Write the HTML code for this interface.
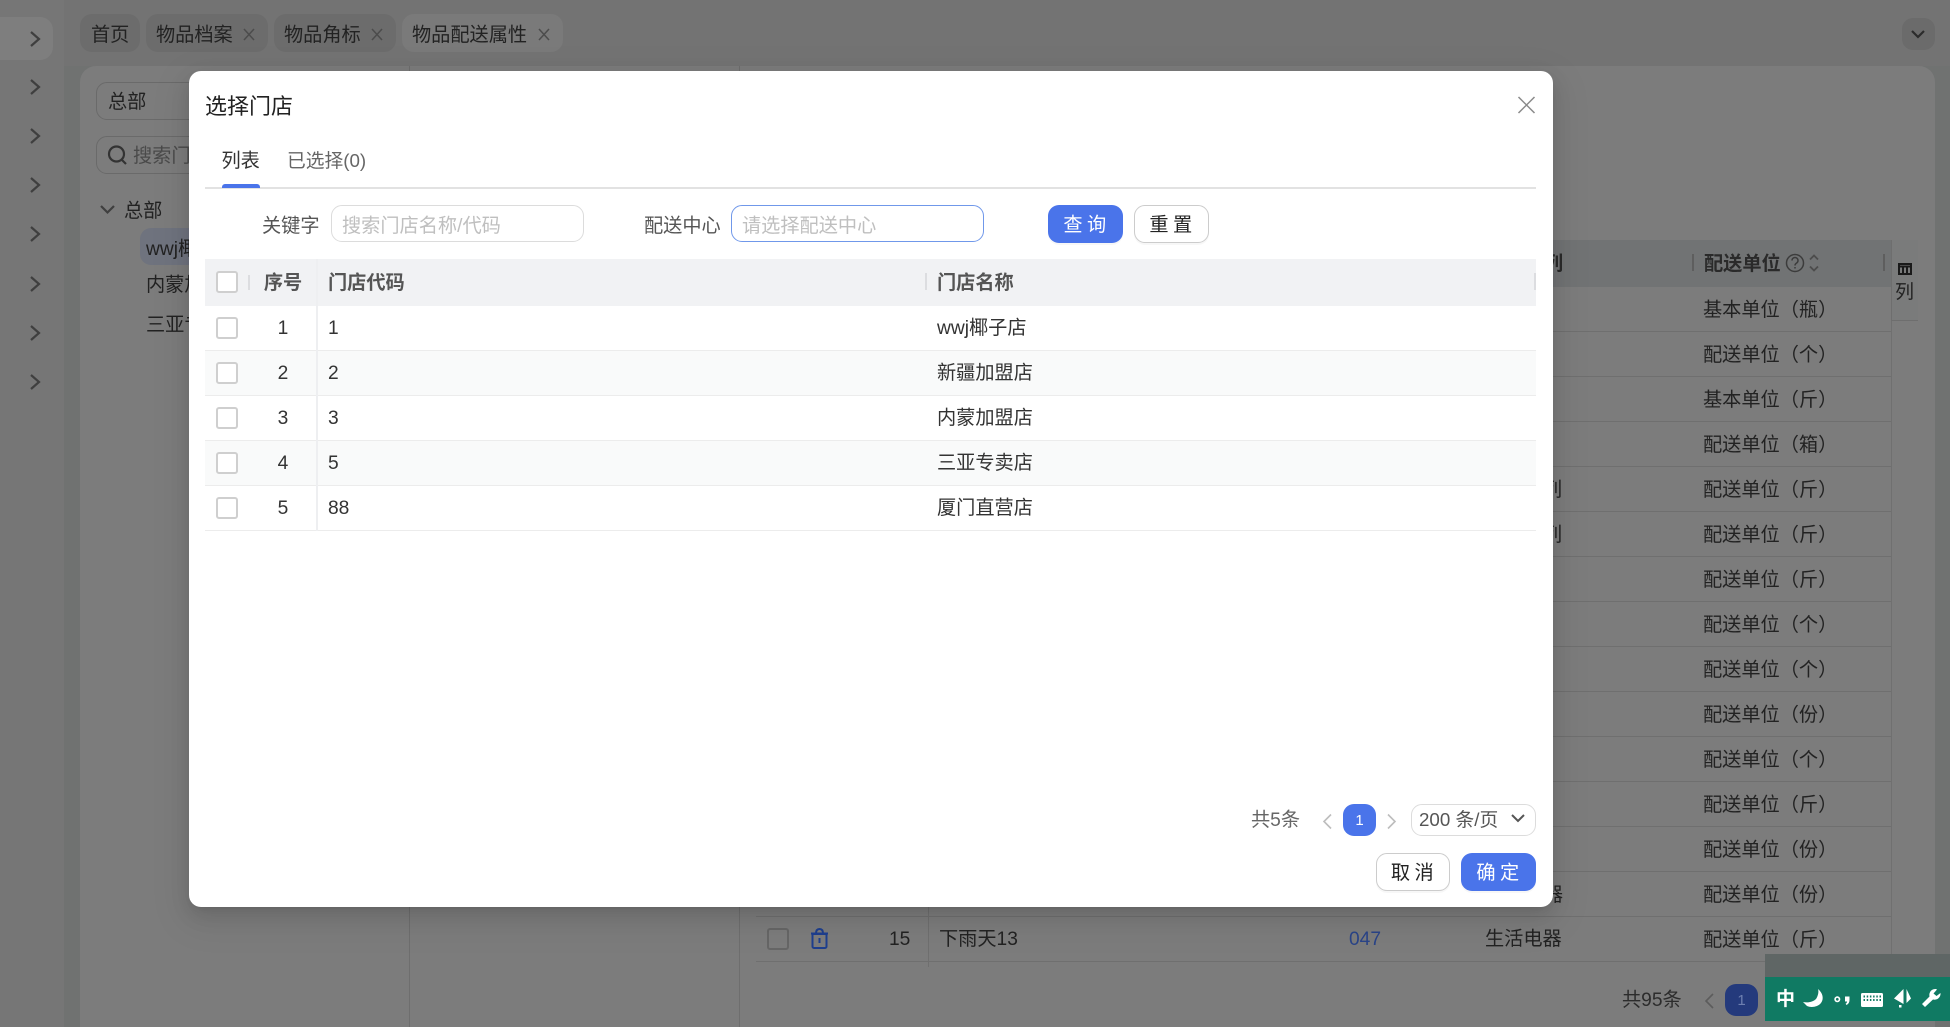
<!DOCTYPE html>
<html lang="zh-CN"><head><meta charset="utf-8"><title>选择门店</title>
<style>
*{box-sizing:border-box;margin:0;padding:0}
html,body{width:1950px;height:1027px;overflow:hidden;background:#737373}
body{position:relative;font-family:"Liberation Sans","Noto Sans CJK SC",sans-serif;font-size:19.2px;color:#222}
.a{position:absolute}
.t{position:absolute;white-space:nowrap;line-height:26px;height:26px;margin-top:1px}
.c{transform:translateX(-50%)}
.cb{position:absolute;width:22px;height:22px;border:2.5px solid #cfcfcf;border-radius:3px;background:#fff}
.bg .t{color:#222}
.hl{position:absolute;height:1px;background:#6f6f6f}
.row{position:absolute;left:205px;width:1331px;height:45px;border-bottom:1.5px solid #ececec}
.btn{position:absolute;height:38px;border-radius:11px;text-align:center;line-height:41px;letter-spacing:4.5px;padding-left:3px;box-shadow:0 2px 0 rgba(0,0,0,.03)}
.pri{background:#4a74ea;color:#fff}
.def{background:#fff;border:1.5px solid #ccc;color:#222;line-height:39px}
.inp{position:absolute;top:205px;height:37px;width:253px;border:1.5px solid #dcdcdc;border-radius:11px;background:#fff}
.ph{color:#bfbfbf}
.sep{position:absolute;width:2px;background:#dcdde0}
svg{position:absolute;overflow:visible}
</style></head><body>

<!-- dimmed background -->
<div class="bg">
<div class="a" style="left:0;top:0;width:64px;height:1027px;background:#767676"></div>
<div class="a" style="left:0;top:17px;width:53px;height:43px;background:#7e7e7e;border-radius:0 13px 13px 0"></div>
<div class="a" style="left:64px;top:66px;width:1886px;height:961px;background:#707271"></div>
<div class="a" style="left:80px;top:66px;width:1855px;height:961px;background:#7c7c7c;border-radius:16px 16px 0 0"></div>
<div class="a" style="left:409px;top:66px;width:1px;height:961px;background:#6e6e6e"></div>
<div class="a" style="left:739px;top:66px;width:1px;height:961px;background:#6e6e6e"></div>

<svg style="left:0;top:0" width="60" height="400" fill="none" stroke="#3f3f3f" stroke-width="2.2">
<path d="M31 32l8 7-8 7M31 80l8 7-8 7M31 129l8 7-8 7M31 178l8 7-8 7M31 227l8 7-8 7M31 277l8 7-8 7M31 326l8 7-8 7M31 375l8 7-8 7"/></svg>

<div class="a" style="left:80px;top:14px;width:60px;height:38px;background:#6c6c6c;border-radius:12px"></div>
<div class="a" style="left:146px;top:14px;width:122px;height:38px;background:#6c6c6c;border-radius:12px"></div>
<div class="a" style="left:274px;top:14px;width:122px;height:38px;background:#6c6c6c;border-radius:12px"></div>
<div class="a" style="left:402px;top:14px;width:161px;height:38px;background:#7a7a7a;border-radius:12px"></div>
<div class="t" style="left:91px;top:22px">首页</div>
<div class="t" style="left:156px;top:22px">物品档案</div>
<div class="t" style="left:284px;top:22px">物品角标</div>
<div class="t" style="left:412px;top:22px">物品配送属性</div>
<svg style="left:0;top:0" width="600" height="60" fill="none" stroke="#4c4c4c" stroke-width="1.5">
<path d="M244 29l10 11M254 29l-10 11M372 29l10 11M382 29l-10 11M539 29l10 11M549 29l-10 11"/></svg>

<div class="a" style="left:1902px;top:18px;width:33px;height:32px;background:#6b6b6b;border-radius:11px"></div>
<svg style="left:0;top:0" width="1950" height="60" fill="none" stroke="#2b2b2b" stroke-width="2.2"><path d="M1912 31l6 6 6-6"/></svg>

<div class="a" style="left:96px;top:82px;width:120px;height:38px;border:1.5px solid #6a6a6a;border-radius:11px"></div>
<div class="t" style="left:108px;top:89px">总部</div>
<div class="a" style="left:96px;top:136px;width:120px;height:38px;border:1.5px solid #6a6a6a;border-radius:11px"></div>
<svg style="left:0;top:0" width="200" height="240" fill="none" stroke="#333" stroke-width="2.2">
<circle cx="116.500" cy="154" r="7.500"/><path d="M122 160l4 4"/>
<path stroke="#3f3f3f" d="M101 206l6.500 6.500 6.500-6.500"/></svg>
<div class="t" style="left:133px;top:143px;color:#4a4a4a">搜索门店</div>
<div class="t" style="left:124px;top:198px">总部</div>
<div class="a" style="left:140px;top:228px;width:60px;height:37px;background:#6f737e;border-radius:11px"></div>
<div class="t" style="left:146px;top:236px">wwj椰子店</div>
<div class="t" style="left:146px;top:272px">内蒙加盟店</div>
<div class="t" style="left:146px;top:312px">三亚专卖店</div>

<!-- right table -->
<div class="a" style="left:756px;top:240px;width:1135px;height:47px;background:#717374"></div>
<div class="a" style="left:1891px;top:240px;width:27px;height:81px;background:#7a7b7b;border-left:1px solid #6e6e6e;border-bottom:1px solid #6e6e6e"></div>
<div class="a" style="left:1891px;top:321px;width:1px;height:640px;background:#707070"></div>
<div class="a" style="left:1692px;top:254px;width:2px;height:17px;background:#5e5e5e"></div>
<div class="a" style="left:1883px;top:254px;width:2px;height:17px;background:#5e5e5e"></div>
<div class="t" style="left:1704px;top:251px;font-weight:700;color:#2a2a2a">配送单位</div>
<svg style="left:0;top:0" width="1950" height="300" fill="none" stroke="#3c3c3c" stroke-width="1.5">
<circle cx="1795" cy="263" r="8.500"/><path d="M1792 260.500a3 3 0 1 1 4.500 2.600c-1 .6-1.500 1.200-1.500 2.400M1795 267v1.500"/>
<path stroke="#4c4c4c" stroke-width="1.800" d="M1810 259.500l4-4 4 4M1810 266.500l4 4 4-4"/>
<path stroke="#1a1a1a" stroke-width="2" d="M1899 264h12v10h-12zM1899 266.500h12M1903 266.500v7.500M1907 266.500v7.500"/></svg>
<div class="t" style="left:1895px;top:279px;font-size:19px">列</div>
<div class="t" style="left:1553px;top:251px;width:10px;overflow:hidden;font-weight:700;direction:rtl;color:#2a2a2a">列</div>
<div class="t" style="left:1553px;top:477px;width:9px;overflow:hidden;direction:rtl">列</div>
<div class="t" style="left:1553px;top:522px;width:9px;overflow:hidden;direction:rtl">列</div>
<div class="t" style="left:1553px;top:882px;width:10px;overflow:hidden;direction:rtl">器</div>

<div class="t" style="left:1703px;top:297px">基本单位（瓶）</div>
<div class="t" style="left:1703px;top:342px">配送单位（个）</div>
<div class="t" style="left:1703px;top:387px">基本单位（斤）</div>
<div class="t" style="left:1703px;top:432px">配送单位（箱）</div>
<div class="t" style="left:1703px;top:477px">配送单位（斤）</div>
<div class="t" style="left:1703px;top:522px">配送单位（斤）</div>
<div class="t" style="left:1703px;top:567px">配送单位（斤）</div>
<div class="t" style="left:1703px;top:612px">配送单位（个）</div>
<div class="t" style="left:1703px;top:657px">配送单位（个）</div>
<div class="t" style="left:1703px;top:702px">配送单位（份）</div>
<div class="t" style="left:1703px;top:747px">配送单位（个）</div>
<div class="t" style="left:1703px;top:792px">配送单位（斤）</div>
<div class="t" style="left:1703px;top:837px">配送单位（份）</div>
<div class="t" style="left:1703px;top:882px">配送单位（份）</div>
<div class="t" style="left:1703px;top:927px">配送单位（斤）</div>

<div class="hl" style="left:1553px;width:338px;top:331px"></div>
<div class="hl" style="left:1553px;width:338px;top:376px"></div>
<div class="hl" style="left:1553px;width:338px;top:421px"></div>
<div class="hl" style="left:1553px;width:338px;top:466px"></div>
<div class="hl" style="left:1553px;width:338px;top:511px"></div>
<div class="hl" style="left:1553px;width:338px;top:556px"></div>
<div class="hl" style="left:1553px;width:338px;top:601px"></div>
<div class="hl" style="left:1553px;width:338px;top:646px"></div>
<div class="hl" style="left:1553px;width:338px;top:691px"></div>
<div class="hl" style="left:1553px;width:338px;top:736px"></div>
<div class="hl" style="left:1553px;width:338px;top:781px"></div>
<div class="hl" style="left:1553px;width:338px;top:826px"></div>
<div class="hl" style="left:1553px;width:338px;top:871px"></div>
<div class="hl" style="left:756px;width:1135px;top:916px"></div>
<div class="hl" style="left:756px;width:1135px;top:961px"></div>
<div class="a" style="left:928px;top:907px;width:1px;height:60px;background:#6f6f6f"></div>

<div class="a" style="left:767px;top:928px;width:22px;height:22px;border:2.5px solid #666;border-radius:3px"></div>
<svg style="left:0;top:0" width="900" height="960" fill="none" stroke="#1e3f8e" stroke-width="2">
<path d="M812.500 934h14v12.500a1.500 1.500 0 0 1-1.500 1.500h-11a1.500 1.500 0 0 1-1.500-1.500zM811 933.500h17M816 933.500c0-3 1-4.500 3.500-4.500s3.500 1.500 3.500 4.500M819.500 938v5"/></svg>
<div class="t" style="left:889px;top:926px">15</div>
<div class="t" style="left:939px;top:926px">下雨天13</div>
<div class="t" style="left:1349px;top:926px;color:#2a4488">047</div>
<div class="t" style="left:1485px;top:926px">生活电器</div>

<div class="t" style="left:1622px;top:987px;color:#2c2c2c">共95条</div>
<svg style="left:0;top:0" width="1750" height="1027" fill="none" stroke="#5c5c5c" stroke-width="1.600"><path d="M1713 994l-7 7 7 7"/></svg>
<div class="a" style="left:1725px;top:984px;width:33px;height:32px;background:#243a7c;border-radius:11px;color:#6d7fb0;text-align:center;line-height:33px;font-size:15px">1</div>

<div class="a" style="left:1765px;top:954px;width:185px;height:23px;background:#5f6665"></div>
<div class="a" style="left:1765px;top:977px;width:185px;height:44px;background:#107a63"></div>
<div class="t" style="left:1776px;top:986px;color:#fff;font-weight:700;font-size:19px">中</div>
<svg style="left:0;top:0" width="1950" height="1027" fill="#fff" stroke="none">
<path d="M1818 989C1823 993 1824 999 1821 1003C1818 1007 1811 1008 1807 1006L1803 1002C1808 1003 1813 1002 1816 999C1818 996 1819 992 1818 989Z"/>
<path fill-rule="evenodd" d="M1837.300 996.300a3 3 0 1 0 .01 0zm0 1.600a1.400 1.400 0 1 1-.01 0z"/>
<path d="M1845 996.500h4.500v3.500c0 2.200-1 4-3 5l-.9-1.200c.9-.6 1.400-1.300 1.500-2.300H1845z"/>
<path fill-rule="evenodd" d="M1862.500 993h19a1.500 1.500 0 0 1 1.500 1.500v11a1.500 1.500 0 0 1-1.500 1.500h-19a1.500 1.500 0 0 1-1.500-1.500v-11a1.500 1.500 0 0 1 1.500-1.500zm1 2.500v2h1.500v-2zm3.200 0v2h1.500v-2zm3.200 0v2h1.500v-2zm3.200 0v2h1.500v-2zm3.200 0v2h1.500v-2zm3.200 0v2h1.500v-2zM1863.500 999v2h1.500v-2zm3.200 0v2h1.500v-2zm3.200 0v2h1.500v-2zm3.200 0v2h1.500v-2zm3.200 0v2h1.500v-2zm3.200 0v2h1.500v-2z"/>
<path d="M1903.500 989v15l-9.500-5.500zM1906.500 989l4.500 9.500-4.500 4.500zM1899 1005h2.500v2.500h-2.500z"/>
<path d="M1936 989a6 6 0 0 0-6.500 7.500l-7.500 7.500 3 3 8-7.500a6 6 0 0 0 7.500-6.500l-4 3-3-2.500 3.500-4z"/>
</svg>
</div>

<!-- modal -->
<div class="a" style="left:189px;top:71px;width:1364px;height:836px;background:#fff;border-radius:12px;box-shadow:0 8px 20px rgba(0,0,0,.1),0 4px 8px -5px rgba(0,0,0,.15),0 11px 35px 10px rgba(0,0,0,.06)"></div>
<div class="t" style="left:205px;top:92px;font-size:22px;line-height:28px;height:28px;color:#222">选择门店</div>
<svg style="left:0;top:0" width="1550" height="130" fill="none" stroke="#8a8a8a" stroke-width="1.500"><path d="M1518.500 97l16 16M1534.500 97l-16 16"/></svg>
<div class="t" style="left:221.500px;top:148px;color:#333">列表</div>
<div class="t" style="left:287px;top:147px;color:#666;font-size:18.75px">已选择(0)</div>
<div class="a" style="left:205px;top:187px;width:1331px;height:1.500px;background:#e2e2e2"></div>
<div class="a" style="left:222px;top:184px;width:38px;height:4px;background:#4a74ea;border-radius:3px 3px 0 0"></div>

<div class="t" style="left:262px;top:213px;color:#555">关键字</div>
<div class="inp" style="left:331px"></div>
<div class="t ph" style="left:342px;top:213px">搜索门店名称/代码</div>
<div class="t" style="left:644px;top:213px;color:#555">配送中心</div>
<div class="inp" style="left:731px;border-color:#7098ea"></div>
<div class="t ph" style="left:742px;top:213px">请选择配送中心</div>
<div class="btn pri" style="left:1048px;top:205px;width:75px">查询</div>
<div class="btn def" style="left:1134px;top:205px;width:75px">重置</div>

<!-- modal table -->
<div class="a" style="left:205px;top:259px;width:1331px;height:47px;background:#f1f2f4"></div>
<div class="row" style="top:306px;background:#fff"></div>
<div class="row" style="top:351px;background:#f9fafa"></div>
<div class="row" style="top:396px;background:#fff"></div>
<div class="row" style="top:441px;background:#f9fafa"></div>
<div class="row" style="top:486px;background:#fff"></div>
<div class="a" style="left:316px;top:259px;width:1.500px;height:272px;background:#eeeff1"></div>
<div class="sep" style="left:248px;top:275px;height:15px"></div>
<div class="sep" style="left:925px;top:273px;height:17px"></div>
<div class="sep" style="left:1534px;top:273px;height:17px"></div>
<div class="cb" style="left:216px;top:271px"></div>
<div class="cb" style="left:216px;top:317px"></div>
<div class="cb" style="left:216px;top:362px"></div>
<div class="cb" style="left:216px;top:407px"></div>
<div class="cb" style="left:216px;top:452px"></div>
<div class="cb" style="left:216px;top:497px"></div>
<div class="t c" style="left:283px;top:270px;font-weight:700;color:#555">序号</div>
<div class="t" style="left:328px;top:270px;font-weight:700;color:#555">门店代码</div>
<div class="t" style="left:937px;top:270px;font-weight:700;color:#555">门店名称</div>
<div class="t c" style="left:283px;top:315px;color:#333">1</div><div class="t" style="left:328px;top:315px;color:#333">1</div><div class="t" style="left:937px;top:315px;color:#333">wwj椰子店</div>
<div class="t c" style="left:283px;top:360px;color:#333">2</div><div class="t" style="left:328px;top:360px;color:#333">2</div><div class="t" style="left:937px;top:360px;color:#333">新疆加盟店</div>
<div class="t c" style="left:283px;top:405px;color:#333">3</div><div class="t" style="left:328px;top:405px;color:#333">3</div><div class="t" style="left:937px;top:405px;color:#333">内蒙加盟店</div>
<div class="t c" style="left:283px;top:450px;color:#333">4</div><div class="t" style="left:328px;top:450px;color:#333">5</div><div class="t" style="left:937px;top:450px;color:#333">三亚专卖店</div>
<div class="t c" style="left:283px;top:495px;color:#333">5</div><div class="t" style="left:328px;top:495px;color:#333">88</div><div class="t" style="left:937px;top:495px;color:#333">厦门直营店</div>

<!-- pagination -->
<div class="t" style="left:1251px;top:807px;color:#666">共5条</div>
<svg style="left:0;top:0" width="1550" height="850" fill="none" stroke="#bdbdbd" stroke-width="1.600"><path d="M1331 814.500l-7 7 7 7M1388 814.500l7 7-7 7"/>
<path stroke="#555" stroke-width="2" d="M1512 815l6 6 6-6"/></svg>
<div class="a" style="left:1343px;top:804px;width:33px;height:32px;background:#4a74ea;border-radius:11px;color:#fff;text-align:center;line-height:33px;font-size:15px">1</div>
<div class="a" style="left:1411px;top:804px;width:125px;height:32px;border:1.500px solid #dcdcdc;border-radius:11px"></div>
<div class="t" style="left:1419px;top:806px;color:#555;font-size:18.75px">200 条/页</div>
<div class="btn def" style="left:1376px;top:853px;width:74px">取消</div>
<div class="btn pri" style="left:1461px;top:853px;width:75px">确定</div>
</body></html>
